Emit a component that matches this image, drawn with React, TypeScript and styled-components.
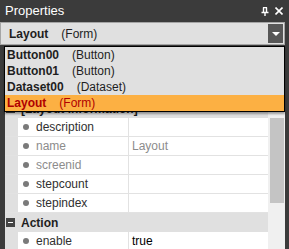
import React, { FC } from "react";
import styled, { createGlobalStyle, css } from "styled-components";

const GlobalStyle = createGlobalStyle`
    html, body {
        margin: 0;
        padding: 0;
        background: #3b3b3b;
    }
    body {
        font-family: "Liberation Sans", Arial, sans-serif;
        font-size: 12px;
    }
`;

const Panel = styled.div`
    position: relative;
    width: 289px;
    height: 249px;
    overflow: hidden;
    background: #3b3b3b;
    display: flex;
    flex-direction: column;
`;

const TitleBar = styled.div`
    height: 22px;
    display: flex;
    align-items: center;
    padding: 0 6px 0 5px;
    color: #ffffff;
    font-size: 13px;
`;

const Title = styled.span`
    flex: 1;
    margin-top: -1px;
`;

const TitleButtons = styled.div`
    display: flex;
    gap: 6px;
    align-items: center;
`;

const Combo = styled.div`
    height: 21px;
    margin-right: 4px;
    border: 1px solid #a5a5a5;
    background: #e0e0e0;
    display: flex;
    align-items: center;
    padding-left: 8px;
    color: #1e1e1e;
`;

const ComboText = styled.div`
    flex: 1;
    display: flex;
`;

const ObjName = styled.span`
    font-weight: bold;
    margin-right: 13px;
`;

const DropButton = styled.div`
    width: 15px;
    height: 19px;
    margin-right: 1px;
    background: #575757;
    display: flex;
    align-items: center;
    justify-content: center;

    &::after {
        content: "";
        border-left: 4px solid transparent;
        border-right: 4px solid transparent;
        border-top: 4px solid #ffffff;
    }
`;

const GridArea = styled.div`
    flex: 1;
    margin: 1px 4px 0 5px;
    background: #ffffff;
    display: flex;
    overflow: hidden;
`;

const Rows = styled.div`
    flex: 1;
    margin-top: -4px;
`;

const Row = styled.div`
    height: 18px;
    display: flex;
    border-bottom: 1px solid #e2e2e2;
`;

const Indent = styled.div`
    width: 13px;
    background: #e0e0e0;
`;

type LabelProps = { $disabled?: boolean };

const Label = styled.div<LabelProps>`
    width: 110px;
    display: flex;
    align-items: center;
    border-right: 1px solid #e2e2e2;
    color: ${({ $disabled }) => ($disabled ? "#8c8c8c" : "#303030")};

    &::before {
        content: "";
        width: 6px;
        height: 6px;
        border-radius: 50%;
        background: #7a7a7a;
        margin: 0 7px 0 5px;
    }
`;

const Value = styled.div<LabelProps>`
    flex: 1;
    display: flex;
    align-items: center;
    padding-left: 3px;
    color: ${({ $disabled }) => ($disabled ? "#8c8c8c" : "#000000")};
`;

const Category = styled.div`
    height: 19px;
    display: flex;
    align-items: center;
    background: #e0e0e0;
    font-weight: bold;
    color: #1e1e1e;
`;

const Collapse = styled.span`
    width: 9px;
    height: 9px;
    margin: 0 6px 0 1px;
    background: #444444;
    display: flex;
    align-items: center;
    justify-content: center;

    &::after {
        content: "";
        width: 5px;
        height: 1px;
        background: #ffffff;
    }
`;

const ScrollTrack = styled.div`
    width: 17px;
    background: #f0f0f0;
    display: flex;
    justify-content: center;
`;

const ScrollThumb = styled.div`
    width: 14px;
    height: 85px;
    margin-top: 72px;
    background: #c4c4c4;
`;

const DropList = styled.div`
    position: absolute;
    left: 4px;
    top: 46px;
    width: 279px;
    background: #e0e0e0;
    border: 1px solid #000000;
    box-shadow: 0 2px 2px rgba(0, 0, 0, 0.35);
`;

type ItemProps = { $selected?: boolean };

const ListItem = styled.div<ItemProps>`
    height: 16px;
    display: flex;
    align-items: center;
    padding-left: 2px;
    color: #1e1e1e;

    ${({ $selected }) => $selected && css`
        background: #fcb043;
        color: #b00000;
    `}
`;

type Prop = { name: string; value?: string; disabled?: boolean };

// rows scrolled under the open list
const hidden: Prop[] = [{ name: "" }, { name: "" }, { name: "" }];
const info: Prop[] = [
    { name: "description" },
    { name: "name", value: "Layout", disabled: true },
    { name: "screenid", disabled: true },
    { name: "stepcount" },
    { name: "stepindex" },
];
const action: Prop[] = [{ name: "enable", value: "true" }, { name: "visible", value: "true" }];

const objects = [
    { name: "Button00", type: "(Button)" },
    { name: "Button01", type: "(Button)" },
    { name: "Dataset00", type: "(Dataset)" },
    { name: "Layout", type: "(Form)" },
];

const PropRow: FC<{ prop: Prop }> = ({ prop }) => (
    <Row>
        <Indent />
        <Label $disabled={prop.disabled}>{prop.name}</Label>
        <Value $disabled={prop.disabled}>{prop.value}</Value>
    </Row>
);

const App: FC = () => (
    <>
        <GlobalStyle />
        <Panel>
            <TitleBar>
                <Title>Properties</Title>
                <TitleButtons>
                    <svg width="8" height="9" viewBox="0 0 8 9">
                        <path d="M2 0.5h4M2.5 0.5v4.5M5.5 0.5v4.5M0.5 5.5h7M4 5.5v3.5" stroke="#fff" strokeWidth="1.4" fill="none" />
                    </svg>
                    <svg width="8" height="8" viewBox="0 0 8 8">
                        <path d="M0.5 0.5L7.5 7.5M7.5 0.5L0.5 7.5" stroke="#fff" strokeWidth="1.6" />
                    </svg>
                </TitleButtons>
            </TitleBar>
            <Combo>
                <ComboText>
                    <ObjName>Layout</ObjName>
                    <span>(Form)</span>
                </ComboText>
                <DropButton />
            </Combo>
            <GridArea>
                <Rows>
                    {hidden.map((p, i) => <PropRow key={i} prop={p} />)}
                    <Category><Collapse />[Layout information]</Category>
                    {info.map(p => <PropRow key={p.name} prop={p} />)}
                    <Category><Collapse />Action</Category>
                    {action.map(p => <PropRow key={p.name} prop={p} />)}
                </Rows>
                <ScrollTrack>
                    <ScrollThumb />
                </ScrollTrack>
            </GridArea>
            <DropList>
                {objects.map(o => (
                    <ListItem key={o.name} $selected={o.name === "Layout"}>
                        <ObjName>{o.name}</ObjName>
                        <span>{o.type}</span>
                    </ListItem>
                ))}
            </DropList>
        </Panel>
    </>
);

export default App;
